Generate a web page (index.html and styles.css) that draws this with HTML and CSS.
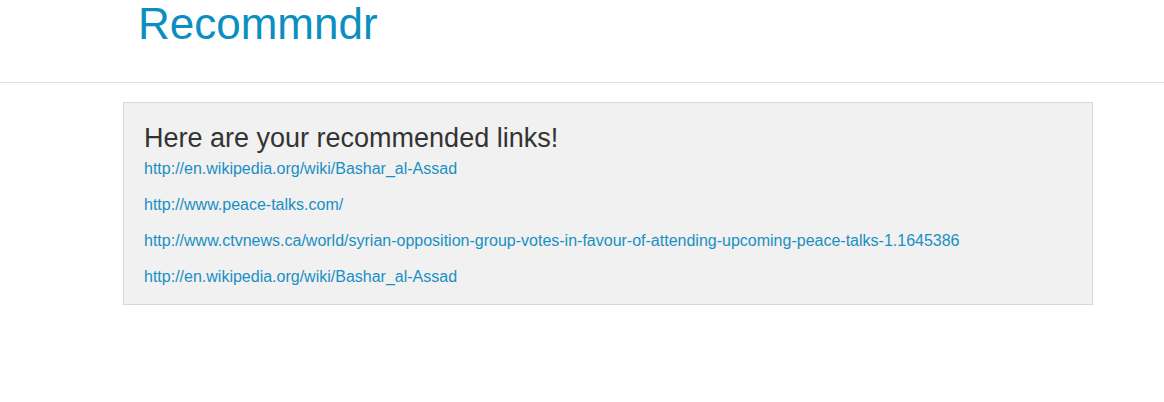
FILE: index.html
```html
<!DOCTYPE html>
<html>
<head>
<meta charset="utf-8">
<link rel="stylesheet" href="styles.css">
</head>
<body>
<header class="masthead">
  <div class="container">
    <h1 class="brand">Recommndr</h1>
  </div>
</header>
<main class="container">
  <div class="well">
    <h3 class="well-title">Here are your recommended links!</h3>
    <p class="link-row"><a href="#">http://en.wikipedia.org/wiki/Bashar_al-Assad</a></p>
    <p class="link-row"><a href="#">http://www.peace-talks.com/</a></p>
    <p class="link-row"><a href="#">http://www.ctvnews.ca/world/syrian-opposition-group-votes-in-favour-of-attending-upcoming-peace-talks-1.1645386</a></p>
    <p class="link-row"><a href="#">http://en.wikipedia.org/wiki/Bashar_al-Assad</a></p>
  </div>
</main>
</body>
</html>
```

FILE: styles.css
```css
html, body {
  margin: 0;
  padding: 0;
  background: #fff;
  font-family: "Liberation Sans", Arial, sans-serif;
  font-size: 14px;
  line-height: 20px;
  color: #333;
}

.container {
  width: 970px;
  margin-left: 123px;
  box-sizing: border-box;
}

.masthead {
  height: 82px;
  border-bottom: 1px solid #dddddd;
}

.masthead .container {
  padding: 0 15px;
}

.brand {
  margin: 0;
  font-size: 44px;
  line-height: 48px;
  font-weight: normal;
  color: #0a8fc0;
}

main.container {
  margin-top: 19px;
}

.well {
  background: #f1f1f1;
  border: 1px solid #d9d9d9;
  padding: 19px 20px 17px;
}

.well-title {
  margin: 0 0 5px;
  font-size: 27px;
  line-height: 32px;
  font-weight: normal;
  color: #333;
}

.link-row {
  margin: 0 0 16px;
  font-size: 16px;
  line-height: 20px;
}

.link-row:last-child {
  margin-bottom: 0;
}

.link-row a {
  color: #1a8fc3;
  text-decoration: none;
}
```
